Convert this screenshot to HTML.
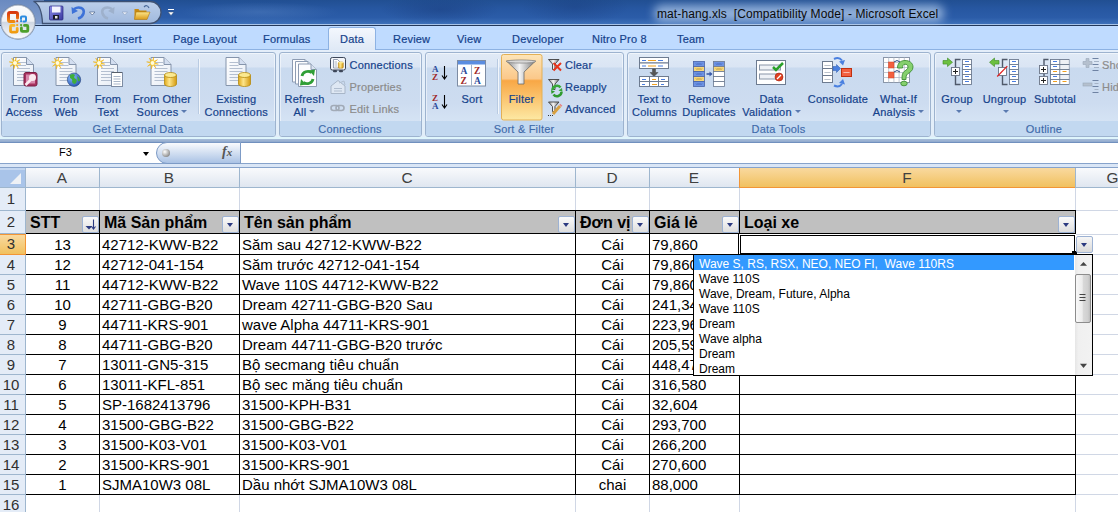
<!DOCTYPE html><html><head><meta charset="utf-8"><style>
*{margin:0;padding:0;box-sizing:border-box}
html,body{width:1118px;height:512px;overflow:hidden;background:#fff;font-family:"Liberation Sans",sans-serif}
.ab{position:absolute}
.t{position:absolute;white-space:nowrap}
.rb{color:#15428b;font-size:11px;line-height:13px;text-align:center;letter-spacing:0.2px;-webkit-text-stroke:0.2px currentColor}
.gl{position:absolute;top:123px;height:13px;color:#3e6aaa;font-size:11px;line-height:13px;text-align:center;white-space:nowrap;letter-spacing:0.2px;-webkit-text-stroke:0.15px currentColor}
.grp{position:absolute;top:52px;height:85px;border:1px solid #9db3cf;border-radius:3px;
 background:linear-gradient(#e0eaf6 0,#dae5f4 14px,#c9daef 15px,#cddcf0 50px,#d5e3f4 68px);overflow:hidden;box-shadow:inset 0 0 0 1px rgba(255,255,255,0.5)}
.grp .lb{position:absolute;left:0;right:0;bottom:0;height:15px;background:#c2d8f0}
.cell{position:absolute;white-space:nowrap;font-size:15px;line-height:20px;color:#000}
</style></head><body>

<div class="ab" style="left:0;top:0;width:1118px;height:25px;background:linear-gradient(#214f92 0%,#2757a1 35%,#2b5ca8 70%,#3a6db6 92%,#4677bd 100%)"></div>
<div class="ab" style="left:380px;top:0;width:120px;height:24px;background:radial-gradient(ellipse at 50% 40%,rgba(20,50,110,0.35),rgba(20,50,110,0) 70%)"></div>
<div class="ab" style="left:520px;top:0;width:110px;height:24px;background:radial-gradient(ellipse at 50% 30%,rgba(20,50,110,0.3),rgba(20,50,110,0) 70%)"></div>
<div class="ab" style="left:180px;top:2px;width:160px;height:20px;background:radial-gradient(ellipse at 50% 50%,rgba(120,160,215,0.25),rgba(120,160,215,0) 70%)"></div>
<div class="ab" style="left:0;top:24px;width:1118px;height:1px;background:#a8c4e8"></div>
<div class="ab" style="left:0;top:25px;width:1118px;height:1px;background:#23385a"></div>
<div class="ab" style="left:654px;top:5px;width:290px;height:17px;border-radius:8px;background:rgba(190,212,240,0.7);filter:blur(5px)"></div>
<div class="t" style="left:657px;top:7px;font-size:12px;line-height:14px;letter-spacing:0.1px;color:#0a0a0a">mat-hang.xls&nbsp; [Compatibility Mode] - Microsoft Excel</div>
<div class="ab" style="left:0;top:0;width:44px;height:24px;background:linear-gradient(#6a8ac0,#819dcc)"></div>
<svg class="ab" style="left:0;top:0" width="200" height="25"><defs><linearGradient id="qat" x1="0" y1="0" x2="0" y2="1"><stop offset="0" stop-color="#bccfea"/><stop offset="1" stop-color="#a0b9de"/></linearGradient><linearGradient id="flop" x1="0" y1="0" x2="1" y2="1"><stop offset="0" stop-color="#8a8ae8"/><stop offset="1" stop-color="#3a3aa0"/></linearGradient><linearGradient id="fold" x1="0" y1="0" x2="0" y2="1"><stop offset="0" stop-color="#fde68a"/><stop offset="1" stop-color="#d99a18"/></linearGradient></defs><path d="M33.5,1.5 H150 A11,11 0 0 1 150,23.5 H42.5 C42,12 40,4 33.5,1.5 Z" fill="url(#qat)" stroke="#3f5273" stroke-width="1.3"/><rect x="49.5" y="6" width="13.5" height="14" rx="1" fill="url(#flop)" stroke="#2a2a80" stroke-width="0.7"/><rect x="52" y="6.5" width="8.5" height="6" fill="#f4f4ff"/><rect x="53" y="15" width="6" height="4.5" fill="#1a1a2a"/><rect x="55" y="16" width="2.5" height="2.5" fill="#e8e8e8"/><path d="M74,9 C79,6 85,8 83.5,13.5 C82.5,16.5 80,18 78,18.5" fill="none" stroke="#3d72d8" stroke-width="2.6"/><path d="M71.5,7 L72,14 L78,11 Z" fill="#3d72d8"/><path d="M89.5,12 h5.5 l-2.75,3 z" fill="#fff" stroke="#35507a" stroke-width="0.6"/><path d="M112,9 C107,6 101,8 102.5,13.5 C103.5,16.5 106,18 108,18.5" fill="none" stroke="#9eb1cc" stroke-width="2.6"/><path d="M114.5,7 L114,14 L108,11 Z" fill="#9eb1cc"/><path d="M122,12 h5.5 l-2.75,3 z" fill="#e8eef8" stroke="#8aa0c0" stroke-width="0.6"/><path d="M134.5,9 h4 l1,1.5 h7 v8.5 h-12 z" fill="#c88a10"/><path d="M136,12 h14 l-3,7.5 h-12.5 z" fill="url(#fold)" stroke="#b07810" stroke-width="0.6"/><path d="M144,7 q3,-3 5,1" fill="none" stroke="#4a6a9a" stroke-width="1.2"/><rect x="168" y="9" width="6" height="1" fill="#fff"/><path d="M168,12 h6 l-3,3.5 z" fill="#fff" stroke="#35507a" stroke-width="0.5"/></svg>
<div class="ab" style="left:0;top:26px;width:1118px;height:24px;background:#bfdbff"></div>
<div class="ab" style="left:0;top:49px;width:1118px;height:1px;background:#8db2e3"></div>
<div class="ab" style="left:328px;top:27px;width:48px;height:23px;border:1px solid #8db2e3;border-bottom:none;border-radius:3px 3px 0 0;background:linear-gradient(#f3f7fd,#dfe9f6)"></div>
<div class="t" style="left:56px;top:33px;font-size:11px;line-height:13px;color:#15428b;letter-spacing:0.2px;-webkit-text-stroke:0.2px currentColor">Home</div>
<div class="t" style="left:113px;top:33px;font-size:11px;line-height:13px;color:#15428b;letter-spacing:0.2px;-webkit-text-stroke:0.2px currentColor">Insert</div>
<div class="t" style="left:173px;top:33px;font-size:11px;line-height:13px;color:#15428b;letter-spacing:0.2px;-webkit-text-stroke:0.2px currentColor">Page Layout</div>
<div class="t" style="left:263px;top:33px;font-size:11px;line-height:13px;color:#15428b;letter-spacing:0.2px;-webkit-text-stroke:0.2px currentColor">Formulas</div>
<div class="t" style="left:340px;top:33px;font-size:11px;line-height:13px;color:#15428b;letter-spacing:0.2px;-webkit-text-stroke:0.2px currentColor">Data</div>
<div class="t" style="left:393px;top:33px;font-size:11px;line-height:13px;color:#15428b;letter-spacing:0.2px;-webkit-text-stroke:0.2px currentColor">Review</div>
<div class="t" style="left:457px;top:33px;font-size:11px;line-height:13px;color:#15428b;letter-spacing:0.2px;-webkit-text-stroke:0.2px currentColor">View</div>
<div class="t" style="left:512px;top:33px;font-size:11px;line-height:13px;color:#15428b;letter-spacing:0.2px;-webkit-text-stroke:0.2px currentColor">Developer</div>
<div class="t" style="left:592px;top:33px;font-size:11px;line-height:13px;color:#15428b;letter-spacing:0.2px;-webkit-text-stroke:0.2px currentColor">Nitro Pro 8</div>
<div class="t" style="left:677px;top:33px;font-size:11px;line-height:13px;color:#15428b;letter-spacing:0.2px;-webkit-text-stroke:0.2px currentColor">Team</div>
<svg class="ab" style="left:0;top:0" width="40" height="44"><defs><linearGradient id="ob" x1="0" y1="0" x2="0" y2="1"><stop offset="0" stop-color="#fdfdfe"/><stop offset="0.48" stop-color="#eef0f4"/><stop offset="0.5" stop-color="#cfd7e2"/><stop offset="0.75" stop-color="#e6eaf0"/><stop offset="1" stop-color="#fbfcfd"/></linearGradient><linearGradient id="lr" x1="0" y1="0" x2="0" y2="1"><stop offset="0" stop-color="#d8380e"/><stop offset="1" stop-color="#f08a10"/></linearGradient><linearGradient id="lo" x1="0" y1="0" x2="0" y2="1"><stop offset="0" stop-color="#fbb828"/><stop offset="1" stop-color="#f09a10"/></linearGradient></defs><circle cx="18" cy="22" r="17.7" fill="#6f7f98" opacity="0.85"/><circle cx="18" cy="22" r="16.8" fill="url(#ob)" stroke="#aeb8c6" stroke-width="0.8"/><g fill="none" stroke-linecap="round"><path d="M17.5,18 V14 Q17.5,12.5 16,12.5 H10 Q8.5,12.5 8.5,14 V20 Q8.5,21.5 10,21.5 H14" stroke="url(#lr)" stroke-width="3"/><path d="M21,19 V17.6 Q21,16.6 22,16.6 H25 Q26,16.6 26,17.6 V20.6 Q26,21.6 25,21.6 H23.5" stroke="#2a8ae0" stroke-width="2"/><path d="M14,25.4 H11.5 Q10.5,25.4 10.5,26.4 V31.1 Q10.5,32.1 11.5,32.1 H16.2 Q17.2,32.1 17.2,31.1 V28.5" stroke="url(#lo)" stroke-width="2.8"/><path d="M24.5,25.4 H26.8 Q27.8,25.4 27.8,26.4 V30.4 Q27.8,31.4 26.8,31.4 H22.4 Q21.4,31.4 21.4,30.4 V28" stroke="#4ea02a" stroke-width="2.8"/></g><circle cx="17.2" cy="21.2" r="1.1" fill="#e2521a"/><circle cx="21.1" cy="21.2" r="1.1" fill="#2a8ae0"/><circle cx="17.2" cy="25.1" r="1.1" fill="#f4a81c"/><circle cx="21.1" cy="25.1" r="1.1" fill="#4ea02a"/></svg>
<div class="ab" style="left:0;top:50px;width:1118px;height:91px;background:linear-gradient(#e4eefa,#e2eef9)"></div>
<div class="grp" style="left:1px;width:275px"><div class="lb"></div></div>
<div class="gl" style="left:1px;width:274px">Get External Data</div>
<div class="grp" style="left:279px;width:143px"><div class="lb"></div></div>
<div class="gl" style="left:279px;width:142px">Connections</div>
<div class="grp" style="left:425px;width:199px"><div class="lb"></div></div>
<div class="gl" style="left:425px;width:198px">Sort &amp; Filter</div>
<div class="grp" style="left:627px;width:304px"><div class="lb"></div></div>
<div class="gl" style="left:627px;width:303px">Data Tools</div>
<div class="grp" style="left:934px;width:221px"><div class="lb"></div></div>
<div class="gl" style="left:934px;width:220px">Outline</div>
<svg class="ab" style="left:0;top:0" width="1118" height="141">
<defs>
<linearGradient id="pg" x1="0" y1="0" x2="1" y2="1"><stop offset="0" stop-color="#ffffff"/><stop offset="1" stop-color="#e6ecf5"/></linearGradient>
<linearGradient id="gold" x1="0" y1="0" x2="1" y2="0"><stop offset="0" stop-color="#e0a818"/><stop offset="0.4" stop-color="#fde58a"/><stop offset="1" stop-color="#d49a10"/></linearGradient>
<linearGradient id="filt" x1="0" y1="0" x2="0" y2="1"><stop offset="0" stop-color="#fde5b8"/><stop offset="0.37" stop-color="#fbc88a"/><stop offset="0.4" stop-color="#f8a745"/><stop offset="1" stop-color="#fde9a4"/></linearGradient>
<linearGradient id="funnel" x1="0" y1="0" x2="1" y2="0"><stop offset="0" stop-color="#8c8c8c"/><stop offset="0.45" stop-color="#f4f4f4"/><stop offset="1" stop-color="#7a7a7a"/></linearGradient>
<radialGradient id="globe" cx="0.35" cy="0.3" r="0.8"><stop offset="0" stop-color="#8fc0ff"/><stop offset="1" stop-color="#1f4fb0"/></radialGradient>
<linearGradient id="sbtn" x1="0" y1="0" x2="0" y2="1"><stop offset="0" stop-color="#ffffff"/><stop offset="1" stop-color="#e3e9f3"/></linearGradient>
</defs>
<g transform="translate(13,57)">
<path d="M0.5,0.5 H13.5 L20.5,7.5 V28.5 H0.5 Z" fill="url(#pg)" stroke="#8594ab"/>
<path d="M13.5,0.5 V7.5 H20.5" fill="#d3def0" stroke="#8594ab"/>
<rect x="4" y="5" width="9" height="1" fill="#b4bfd0"/><rect x="4" y="8" width="9" height="1" fill="#b4bfd0"/><rect x="4" y="11" width="13" height="1" fill="#b4bfd0"/><rect x="4" y="14" width="13" height="1" fill="#b4bfd0"/><rect x="4" y="17" width="13" height="1" fill="#b4bfd0"/><rect x="4" y="20" width="13" height="1" fill="#b4bfd0"/><rect x="4" y="23" width="13" height="1" fill="#b4bfd0"/><g transform="translate(2,6)"><polygon points="5.88,1.17 1.41,0.94 3.33,4.99 0.33,1.67 -1.17,5.88 -0.94,1.41 -4.99,3.33 -1.67,0.33 -5.88,-1.17 -1.41,-0.94 -3.33,-4.99 -0.33,-1.67 1.17,-5.88 0.94,-1.41 4.99,-3.33 1.67,-0.33" fill="#ffd820" stroke="#e8a000" stroke-width="0.4"/><circle cx="0" cy="0" r="2" fill="#fffbe0"/></g></g><g transform="translate(23.5,72)"><rect x="0.5" y="0.5" width="13" height="13.5" rx="2" fill="#a8325f" stroke="#7a1d42"/>
<rect x="2.5" y="2.5" width="9" height="9" fill="#d889ac"/>
<circle cx="9" cy="5.5" r="3.5" fill="#fbe9ef"/><path d="M8,7 L2,13" stroke="#fbe9ef" stroke-width="2.5"/></g><g transform="translate(55.5,57)">
<path d="M0.5,0.5 H13.5 L20.5,7.5 V28.5 H0.5 Z" fill="url(#pg)" stroke="#8594ab"/>
<path d="M13.5,0.5 V7.5 H20.5" fill="#d3def0" stroke="#8594ab"/>
<rect x="4" y="5" width="9" height="1" fill="#b4bfd0"/><rect x="4" y="8" width="9" height="1" fill="#b4bfd0"/><rect x="4" y="11" width="13" height="1" fill="#b4bfd0"/><rect x="4" y="14" width="13" height="1" fill="#b4bfd0"/><rect x="4" y="17" width="13" height="1" fill="#b4bfd0"/><rect x="4" y="20" width="13" height="1" fill="#b4bfd0"/><rect x="4" y="23" width="13" height="1" fill="#b4bfd0"/><g transform="translate(2,6)"><polygon points="5.88,1.17 1.41,0.94 3.33,4.99 0.33,1.67 -1.17,5.88 -0.94,1.41 -4.99,3.33 -1.67,0.33 -5.88,-1.17 -1.41,-0.94 -3.33,-4.99 -0.33,-1.67 1.17,-5.88 0.94,-1.41 4.99,-3.33 1.67,-0.33" fill="#ffd820" stroke="#e8a000" stroke-width="0.4"/><circle cx="0" cy="0" r="2" fill="#fffbe0"/></g></g><circle cx="74" cy="79.7" r="6.7" fill="url(#globe)" stroke="#24427a" stroke-width="0.6"/>
<path d="M70,75 q3,-2 5,0 q-2,3 1,4 q2,2 -1,5 q-2,0 -3,-2 q1,-3 -2,-4z" fill="#3fae3a"/>
<path d="M77,76 q2,1 3,4 q-1,2 -2,1z" fill="#3fae3a"/><g transform="translate(97,57)">
<path d="M0.5,0.5 H13.5 L20.5,7.5 V28.5 H0.5 Z" fill="url(#pg)" stroke="#8594ab"/>
<path d="M13.5,0.5 V7.5 H20.5" fill="#d3def0" stroke="#8594ab"/>
<rect x="4" y="5" width="9" height="1" fill="#b4bfd0"/><rect x="4" y="8" width="9" height="1" fill="#b4bfd0"/><rect x="4" y="11" width="13" height="1" fill="#b4bfd0"/><rect x="4" y="14" width="13" height="1" fill="#b4bfd0"/><rect x="4" y="17" width="13" height="1" fill="#b4bfd0"/><rect x="4" y="20" width="13" height="1" fill="#b4bfd0"/><rect x="4" y="23" width="13" height="1" fill="#b4bfd0"/><g transform="translate(2,6)"><polygon points="5.88,1.17 1.41,0.94 3.33,4.99 0.33,1.67 -1.17,5.88 -0.94,1.41 -4.99,3.33 -1.67,0.33 -5.88,-1.17 -1.41,-0.94 -3.33,-4.99 -0.33,-1.67 1.17,-5.88 0.94,-1.41 4.99,-3.33 1.67,-0.33" fill="#ffd820" stroke="#e8a000" stroke-width="0.4"/><circle cx="0" cy="0" r="2" fill="#fffbe0"/></g></g><g transform="translate(111,71)"><rect x="0.5" y="1.5" width="11" height="14" fill="#ffffff" stroke="#7d8ca3"/>
<path d="M1.5,1.5h1M3.5,1.5h1M5.5,1.5h1M7.5,1.5h1M9.5,1.5h1" stroke="#333" stroke-width="1.2"/>
<rect x="2.5" y="5" width="7" height="1" fill="#a9b6c9"/><rect x="2.5" y="7.5" width="7" height="1" fill="#a9b6c9"/><rect x="2.5" y="10" width="7" height="1" fill="#a9b6c9"/><rect x="2.5" y="12.5" width="7" height="1" fill="#a9b6c9"/></g><g transform="translate(150.5,57)">
<path d="M0.5,0.5 H13.5 L20.5,7.5 V28.5 H0.5 Z" fill="url(#pg)" stroke="#8594ab"/>
<path d="M13.5,0.5 V7.5 H20.5" fill="#d3def0" stroke="#8594ab"/>
<rect x="4" y="5" width="9" height="1" fill="#b4bfd0"/><rect x="4" y="8" width="9" height="1" fill="#b4bfd0"/><rect x="4" y="11" width="13" height="1" fill="#b4bfd0"/><rect x="4" y="14" width="13" height="1" fill="#b4bfd0"/><rect x="4" y="17" width="13" height="1" fill="#b4bfd0"/><rect x="4" y="20" width="13" height="1" fill="#b4bfd0"/><rect x="4" y="23" width="13" height="1" fill="#b4bfd0"/><g transform="translate(2,6)"><polygon points="5.88,1.17 1.41,0.94 3.33,4.99 0.33,1.67 -1.17,5.88 -0.94,1.41 -4.99,3.33 -1.67,0.33 -5.88,-1.17 -1.41,-0.94 -3.33,-4.99 -0.33,-1.67 1.17,-5.88 0.94,-1.41 4.99,-3.33 1.67,-0.33" fill="#ffd820" stroke="#e8a000" stroke-width="0.4"/><circle cx="0" cy="0" r="2" fill="#fffbe0"/></g></g><g transform="translate(164.5,72.5)">
<path d="M0,2.5 V11.5 A6.0,2.5 0 0 0 12,11.5 V2.5" fill="url(#gold)" stroke="#b58a10" stroke-width="0.8"/>
<ellipse cx="6.0" cy="2.5" rx="6.0" ry="2.5" fill="#fbe98f" stroke="#b58a10" stroke-width="0.8"/></g><g transform="translate(225.5,57)">
<path d="M0.5,0.5 H13.5 L20.5,7.5 V28.5 H0.5 Z" fill="url(#pg)" stroke="#8594ab"/>
<path d="M13.5,0.5 V7.5 H20.5" fill="#d3def0" stroke="#8594ab"/>
<rect x="4" y="5" width="9" height="1" fill="#b4bfd0"/><rect x="4" y="8" width="9" height="1" fill="#b4bfd0"/><rect x="4" y="11" width="13" height="1" fill="#b4bfd0"/><rect x="4" y="14" width="13" height="1" fill="#b4bfd0"/><rect x="4" y="17" width="13" height="1" fill="#b4bfd0"/><rect x="4" y="20" width="13" height="1" fill="#b4bfd0"/><rect x="4" y="23" width="13" height="1" fill="#b4bfd0"/></g><g transform="translate(238.5,72.5)">
<path d="M0,2.5 V11.5 A6.0,2.5 0 0 0 12,11.5 V2.5" fill="url(#gold)" stroke="#b58a10" stroke-width="0.8"/>
<ellipse cx="6.0" cy="2.5" rx="6.0" ry="2.5" fill="#fbe98f" stroke="#b58a10" stroke-width="0.8"/></g><rect x="198" y="59" width="1" height="55" fill="#b9cbe2"/><rect x="199" y="59" width="1" height="55" fill="#f2f6fb"/><g transform="translate(292,59)"><path d="M0.5,0.5 H13 L18.5,6 V23 H0.5 Z" fill="#fdfdfe" stroke="#8d9cb3"/><path d="M13,0.5 V6 H18.5" fill="#dae3f1" stroke="#8d9cb3"/></g><g transform="translate(295,61)"><path d="M0.5,0.5 H13 L18.5,6 V23 H0.5 Z" fill="#fdfdfe" stroke="#8d9cb3"/><path d="M13,0.5 V6 H18.5" fill="#dae3f1" stroke="#8d9cb3"/></g><g transform="translate(298,63.5)"><path d="M0.5,0.5 H13 L18.5,6 V23 H0.5 Z" fill="#fdfdfe" stroke="#8d9cb3"/><path d="M13,0.5 V6 H18.5" fill="#dae3f1" stroke="#8d9cb3"/></g><path d="M302,76 A6,5.5 0 0 1 311.5,72.5" fill="none" stroke="#2f9e36" stroke-width="2.8"/>
<path d="M309,70.5 L315,69.5 L314,76 Z" fill="#2f9e36"/>
<path d="M313,79 A6,5.5 0 0 1 303.5,82.5" fill="none" stroke="#2f9e36" stroke-width="2.8"/>
<path d="M306,84.5 L300,85.5 L301,79 Z" fill="#2f9e36"/><rect x="330.5" y="57.5" width="15" height="12.5" rx="1.8" fill="#f4f6fa" stroke="#3c4658"/>
<rect x="333" y="70" width="4" height="2.2" rx="1" fill="#3c4658"/><rect x="339" y="70" width="4" height="2.2" rx="1" fill="#3c4658"/>
<path d="M333.5,59.5 h4 l2,2 v6.5 h-6z" fill="#fff" stroke="#6a7890" stroke-width="0.7"/>
<path d="M334.5,62h2.5M334.5,64h2.5M334.5,66h2.5" stroke="#8a96a8" stroke-width="0.7"/>
<rect x="338.3" y="62" width="5" height="6.2" rx="1.2" fill="url(#gold)" stroke="#a07010" stroke-width="0.5"/>
<ellipse cx="340.8" cy="62.6" rx="2.5" ry="0.9" fill="#fbe98f"/><g transform="translate(330,80)" opacity="0.55"><path d="M1,6 L8,0.5 L15,6 V13.5 H1z" fill="#eef2f7" stroke="#8c98a8"/>
<rect x="4" y="8" width="8" height="1" fill="#9aa6b6"/><rect x="4" y="10.5" width="8" height="1" fill="#9aa6b6"/>
<path d="M9,3 l5,-2 l1,4" fill="none" stroke="#9aa6b6"/></g><g transform="translate(330,104)" fill="none" stroke="#9aa2ad" stroke-width="1.6" opacity="0.85">
<rect x="1" y="1.5" width="8" height="5" rx="2.5"/><rect x="6" y="1.5" width="8" height="5" rx="2.5"/></g><g font-family="'Liberation Serif',serif" font-weight="bold" font-size="9">
<text x="432" y="72" fill="#2a4a9a">A</text><text x="432" y="80" fill="#a02828">Z</text>
<text x="432" y="101" fill="#a02828">Z</text><text x="432" y="109" fill="#2a4a9a">A</text></g>
<path d="M444.5,66 V78 M442,75.5 l2.5,3.5 l2.5,-3.5 M444.5,95 V107 M442,104.5 l2.5,3.5 l2.5,-3.5" stroke="#000" stroke-width="1.1" fill="none"/><g transform="translate(457,60)"><rect x="0.5" y="0.5" width="28" height="25.5" fill="#fff" stroke="#7d8ca3"/>
<rect x="1" y="1" width="27" height="3.5" fill="#5b8de0"/>
<rect x="14" y="4.5" width="1" height="21" fill="#9fb0c8"/>
<g font-family="'Liberation Serif',serif" font-weight="bold" font-size="9.5">
<text x="3.5" y="14" fill="#2a4a9a">A</text><text x="3.5" y="23.5" fill="#a02828">Z</text>
<text x="17" y="14" fill="#a02828">Z</text><text x="17" y="23.5" fill="#2a4a9a">A</text></g></g><rect x="497" y="59" width="1" height="55" fill="#b9cbe2"/><rect x="498" y="59" width="1" height="55" fill="#f2f6fb"/><rect x="501.5" y="54.5" width="40.5" height="65.5" rx="2" fill="url(#filt)" stroke="#e3b055"/>
<path d="M506.5,61 H535.5 L524,72 V84 H518 V72 Z" fill="url(#funnel)" stroke="#6a6a6a" stroke-width="0.8"/>
<ellipse cx="521" cy="61.5" rx="14.5" ry="1.6" fill="#d8d8d8" stroke="#707070" stroke-width="0.6"/><g transform="translate(548,58.5)"><path d="M0.5,1 H11 L7,5.5 V11 H4.5 V5.5Z" fill="url(#funnel)" stroke="#404040" stroke-width="0.9"/>
<path d="M5.5,4.5 L13,12 M13,4.5 L5.5,12" stroke="#e8341a" stroke-width="2"/></g>
<g transform="translate(548,78.5)"><path d="M0.5,1 H11 L7,5.5 V11 H4.5 V5.5Z" fill="url(#funnel)" stroke="#404040" stroke-width="0.9"/>
<path d="M4.5,11.5 A4.5,4.5 0 0 1 12.5,9" fill="none" stroke="#38a838" stroke-width="2.6"/><path d="M14,9.5 l0.5,4 l-4,-1.5z" fill="#38a838"/>
<path d="M13.5,13.5 A4.5,4.5 0 0 1 5.5,16" fill="none" stroke="#2f9a2f" stroke-width="2.6"/><path d="M3.5,15.5 l-0.5,-4 l4,1.5z" fill="#2f9a2f"/></g>
<g transform="translate(548,101)"><path d="M0.5,1 H11 L7,5.5 V10.5 H4.5 V5.5Z" fill="url(#funnel)" stroke="#404040" stroke-width="0.9"/>
<path d="M5,13 L12,5" stroke="#d8a040" stroke-width="3"/><path d="M12.3,4.7 l1,-1" stroke="#e88080" stroke-width="3"/>
<path d="M0,14.5h1M2,14.5h1M4,14.5h1" stroke="#333" stroke-width="1"/></g><g transform="translate(639,57)"><rect x="0.5" y="0.5" width="29" height="5.5" fill="#fff" stroke="#6d7b90"/><rect x="0.5" y="6" width="29" height="5.5" fill="#fff" stroke="#6d7b90"/>
<rect x="3" y="3" width="4" height="1" fill="#4a7ee0"/><rect x="9" y="3" width="8" height="1" fill="#f0a020"/><rect x="19" y="3" width="5" height="1" fill="#4a7ee0"/>
<rect x="3" y="8.5" width="4" height="1" fill="#4a7ee0"/><rect x="9" y="8.5" width="8" height="1" fill="#f0a020"/><rect x="19" y="8.5" width="5" height="1" fill="#4a7ee0"/>
<path d="M13.5,12 h3 v3.5 h2.5 l-4,4 l-4,-4 h2.5z" fill="#555" stroke="#444" stroke-width="0.5"/>
<rect x="0.5" y="19.5" width="29" height="10" fill="#fff" stroke="#6d7b90"/><path d="M10.5,19.5V29.5M19.5,19.5V29.5M0.5,24.5H29.5" stroke="#6d7b90"/>
<rect x="3" y="22" width="4" height="1" fill="#4a7ee0"/><rect x="13" y="22" width="4" height="1" fill="#f0a020"/><rect x="22" y="22" width="4" height="1" fill="#4a7ee0"/>
<rect x="3" y="27" width="3" height="1" fill="#4a7ee0"/><rect x="13" y="27" width="5" height="1" fill="#f0a020"/><rect x="22" y="27" width="3" height="1" fill="#4a7ee0"/></g><g transform="translate(693,61)"><rect x="0.5" y="0.5" width="11" height="5" fill="#6d93e3" stroke="#4a64a8" stroke-width="0.8"/><path d="M3,2.5 l1,1 l1,-1 l1,1 l1,-1 l1,1 l1,-1" fill="none" stroke="#2a48a0" stroke-width="0.6"/><rect x="0.5" y="5.5" width="11" height="5" fill="#f7d77a" stroke="#4a64a8" stroke-width="0.8"/><path d="M3,7.5 l1,1 l1,-1 l1,1 l1,-1 l1,1 l1,-1" fill="none" stroke="#8a6a10" stroke-width="0.6"/><rect x="0.5" y="10.5" width="11" height="5" fill="#6d93e3" stroke="#4a64a8" stroke-width="0.8"/><path d="M3,12.5 l1,1 l1,-1 l1,1 l1,-1 l1,1 l1,-1" fill="none" stroke="#2a48a0" stroke-width="0.6"/><rect x="0.5" y="15.5" width="11" height="5" fill="#f7d77a" stroke="#4a64a8" stroke-width="0.8"/><path d="M3,17.5 l1,1 l1,-1 l1,1 l1,-1 l1,1 l1,-1" fill="none" stroke="#8a6a10" stroke-width="0.6"/><rect x="0.5" y="20.5" width="11" height="5" fill="#6d93e3" stroke="#4a64a8" stroke-width="0.8"/><path d="M3,22.5 l1,1 l1,-1 l1,1 l1,-1 l1,1 l1,-1" fill="none" stroke="#2a48a0" stroke-width="0.6"/><path d="M13.5,13 h5" stroke="#3a5aa8" stroke-width="1.6"/><path d="M16.5,10.5 l3,2.5 l-3,2.5z" fill="#3a5aa8"/><rect x="20.5" y="0.5" width="11" height="5" fill="#6d93e3" stroke="#6a7890" stroke-width="0.8"/><path d="M23,2.5 l1,1 l1,-1 l1,1 l1,-1 l1,1 l1,-1" fill="none" stroke="#2a48a0" stroke-width="0.6"/><rect x="20.5" y="5.5" width="11" height="5" fill="#f7d77a" stroke="#6a7890" stroke-width="0.8"/><path d="M23,7.5 l1,1 l1,-1 l1,1 l1,-1 l1,1 l1,-1" fill="none" stroke="#8a6a10" stroke-width="0.6"/><rect x="20.5" y="10.5" width="11" height="5" fill="#ffffff" stroke="#6a7890" stroke-width="0.8"/><rect x="20.5" y="15.5" width="11" height="5" fill="#ffffff" stroke="#6a7890" stroke-width="0.8"/><rect x="20.5" y="20.5" width="11" height="5" fill="#ffffff" stroke="#6a7890" stroke-width="0.8"/></g><g transform="translate(756,60)"><rect x="0.5" y="0.5" width="29" height="24" fill="#fff" stroke="#6d7b90"/>
<rect x="3.5" y="5" width="21" height="5" fill="#eef1f6" stroke="#8a96a8"/><rect x="3.5" y="14" width="21" height="5" fill="#eef1f6" stroke="#8a96a8"/>
<path d="M17,7 l3,3 l7,-7" stroke="#2aa02a" stroke-width="2.5" fill="none"/>
<circle cx="23" cy="17" r="4" fill="#e04020" stroke="#a02010" stroke-width="0.6"/><path d="M21,19 l4,-4" stroke="#fff" stroke-width="1.3"/></g><g transform="translate(822,61)"><rect x="0.5" y="0.5" width="10" height="7" fill="#fff" stroke="#6d7b90"/><rect x="0.5" y="7.5" width="10" height="7" fill="#fff" stroke="#6d7b90"/><rect x="0.5" y="14.5" width="10" height="7" fill="#fff" stroke="#6d7b90"/>
<path d="M2.5,4 l1,1 l1,-1 l1,1 l1,-1 l1,1 l1,-1 M2.5,11 l1,1 l1,-1 l1,1 l1,-1 l1,1 l1,-1 M2.5,18 l1,1 l1,-1 l1,1 l1,-1 l1,1 l1,-1" fill="none" stroke="#8a96a8" stroke-width="0.7"/></g>
<path d="M833,66.5 h3.5 v-2 l4,4 l-4,4 v-2 h-3.5z" fill="#4a80e0" stroke="#2a5ab0" stroke-width="0.5"/>
<rect x="841.5" y="68.5" width="10" height="8" fill="#f26040" stroke="#c03010"/>
<path d="M843.5,72 l1,1 l1,-1 l1,1 l1,-1 l1,1 l1,-1" fill="none" stroke="#fff" stroke-width="0.7"/>
<path d="M834,59 Q839,56.5 842,60.5" fill="none" stroke="#4a80e0" stroke-width="2"/><path d="M839,61.5 L845,60 L843,65.5z" fill="#4a80e0"/>
<path d="M834,85.5 Q839,88 842,84" fill="none" stroke="#4a80e0" stroke-width="2"/><path d="M839,83 L845,84.5 L843,79z" fill="#4a80e0"/><g transform="translate(883,57)"><rect x="0.5" y="0.5" width="26" height="25" fill="#fff" stroke="#8a96a8"/><path d="M5.7,0.5V25.5M0.5,5.5H26.5" stroke="#b0bac8" stroke-width="0.8"/><path d="M10.9,0.5V25.5M0.5,10.5H26.5" stroke="#b0bac8" stroke-width="0.8"/><path d="M16.1,0.5V25.5M0.5,15.5H26.5" stroke="#b0bac8" stroke-width="0.8"/><path d="M21.3,0.5V25.5M0.5,20.5H26.5" stroke="#b0bac8" stroke-width="0.8"/><rect x="5.5" y="5" width="5.5" height="6" fill="#f26040" stroke="#d04020" stroke-width="0.5"/><rect x="5.5" y="15" width="5.5" height="6" fill="#f26040" stroke="#d04020" stroke-width="0.5"/>
<path d="M11,5 q3,-3 6,0 M11,15 q3,-3 6,0" fill="none" stroke="#2a4a80" stroke-width="1"/></g>
<path d="M897.5,68 C897.5,62 902,60.5 905,60.5 C909.5,60.5 913,63 913,67 C913,71 909.5,72.5 907.5,74 C906,75 906,77 906,79.5 L902,79.5 C902,76 902,73 904.5,71.2 C906.5,69.8 908,68.8 908,67 C908,65 906.5,64.2 905,64.2 C903,64.2 902.5,66 902.5,68 Z" fill="#86d06e" stroke="#3f8f35" stroke-width="0.9"/>
<ellipse cx="904" cy="83.5" rx="3.2" ry="2.3" fill="#86d06e" stroke="#3f8f35" stroke-width="0.9"/><path d="M943,60.5 h4.5 v-2.5 l5,4.3 l-5,4.3 v-2.5 h-4.5z" fill="#6cc040" stroke="#3a8a20" stroke-width="0.6"/><path d="M960.5,59.5 h-5 v25 h5" fill="none" stroke="#4f596a" stroke-width="1.4"/><rect x="951.5" y="67.5" width="8" height="8" fill="#fff" stroke="#6a7486" stroke-width="0.9"/><path d="M953.0,71.5h5M955.5,69.0v5" stroke="#222" stroke-width="1"/><rect x="962.5" y="59.5" width="9" height="5" fill="#fff" stroke="#6d7b90" stroke-width="0.9"/><rect x="965.0" y="61.0" width="4" height="1" fill="#4a7ee0"/><rect x="962.5" y="64.5" width="9" height="5" fill="#fff" stroke="#6d7b90" stroke-width="0.9"/><rect x="965.0" y="66.0" width="4" height="1" fill="#4a7ee0"/><rect x="962.5" y="69.5" width="9" height="5" fill="#fff" stroke="#6d7b90" stroke-width="0.9"/><rect x="965.0" y="71.0" width="4" height="1" fill="#4a7ee0"/><rect x="962.5" y="74.5" width="9" height="5" fill="#fff" stroke="#6d7b90" stroke-width="0.9"/><rect x="965.0" y="76.0" width="4" height="1" fill="#4a7ee0"/><rect x="962.5" y="79.5" width="9" height="5" fill="#fff" stroke="#6d7b90" stroke-width="0.9"/><rect x="965.0" y="81.0" width="4" height="1" fill="#4a7ee0"/><path d="M999,60.5 h-4.5 v-2.5 l-5,4.3 l5,4.3 v-2.5 h4.5z" fill="#6cc040" stroke="#3a8a20" stroke-width="0.6"/><path d="M1007.5,59.5 h-5 v25 h5" fill="none" stroke="#4f596a" stroke-width="1.4"/><rect x="998.5" y="67.5" width="8" height="8" fill="#fff" stroke="#6a7486" stroke-width="0.9"/><path d="M997.2,76.5 L1007.3,66.2" stroke="#e02020" stroke-width="1.2"/><rect x="1009.5" y="59.5" width="9" height="5" fill="#fff" stroke="#6d7b90" stroke-width="0.9"/><rect x="1012.0" y="61.0" width="4" height="1" fill="#4a7ee0"/><rect x="1009.5" y="64.5" width="9" height="5" fill="#fff" stroke="#6d7b90" stroke-width="0.9"/><rect x="1012.0" y="66.0" width="4" height="1" fill="#4a7ee0"/><rect x="1009.5" y="69.5" width="9" height="5" fill="#fff" stroke="#6d7b90" stroke-width="0.9"/><rect x="1012.0" y="71.0" width="4" height="1" fill="#4a7ee0"/><rect x="1009.5" y="74.5" width="9" height="5" fill="#fff" stroke="#6d7b90" stroke-width="0.9"/><rect x="1012.0" y="76.0" width="4" height="1" fill="#4a7ee0"/><rect x="1009.5" y="79.5" width="9" height="5" fill="#fff" stroke="#6d7b90" stroke-width="0.9"/><rect x="1012.0" y="81.0" width="4" height="1" fill="#4a7ee0"/><path d="M1048.5,59.5 h-4.5 v6 M1044,73.5 v3" fill="none" stroke="#4f596a" stroke-width="1.4"/><rect x="1039.5" y="65.5" width="8" height="8" fill="#fff" stroke="#6a7486" stroke-width="0.9"/><path d="M1041.0,69.5h5M1043.5,67.0v5" stroke="#222" stroke-width="1"/><rect x="1039.5" y="76.5" width="8" height="8" fill="#fff" stroke="#6a7486" stroke-width="0.9"/><path d="M1041.0,80.5h5M1043.5,78.0v5" stroke="#222" stroke-width="1"/><rect x="1050.5" y="59.5" width="18.5" height="5" fill="#fff" stroke="#6d7b90" stroke-width="0.9"/><rect x="1059.75" y="60.0" width="9" height="4" fill="#eef1f6"/><path d="M1059.75,59.5v5" stroke="#6d7b90" stroke-width="0.9"/><rect x="1053.0" y="61.0" width="4" height="1" fill="#4a7ee0"/><rect x="1050.5" y="64.5" width="18.5" height="5" fill="#fff" stroke="#6d7b90" stroke-width="0.9"/><rect x="1059.75" y="65.0" width="9" height="4" fill="#eef1f6"/><path d="M1059.75,64.5v5" stroke="#6d7b90" stroke-width="0.9"/><rect x="1053.0" y="66.0" width="4" height="1" fill="#4a7ee0"/><rect x="1050.5" y="69.5" width="18.5" height="5" fill="#fff" stroke="#6d7b90" stroke-width="0.9"/><rect x="1059.75" y="70.0" width="9" height="4" fill="#fff"/><path d="M1059.75,69.5v5" stroke="#6d7b90" stroke-width="0.9"/><rect x="1053.0" y="71.0" width="4" height="1" fill="#f0a020"/><rect x="1062.5" y="71.0" width="4" height="1" fill="#f0a020"/><rect x="1050.5" y="74.5" width="18.5" height="5" fill="#fff" stroke="#6d7b90" stroke-width="0.9"/><rect x="1059.75" y="75.0" width="9" height="4" fill="#eef1f6"/><path d="M1059.75,74.5v5" stroke="#6d7b90" stroke-width="0.9"/><rect x="1053.0" y="76.0" width="4" height="1" fill="#4a7ee0"/><rect x="1050.5" y="79.5" width="18.5" height="5" fill="#fff" stroke="#6d7b90" stroke-width="0.9"/><rect x="1059.75" y="80.0" width="9" height="4" fill="#fff"/><path d="M1059.75,79.5v5" stroke="#6d7b90" stroke-width="0.9"/><rect x="1053.0" y="81.0" width="4" height="1" fill="#f0a020"/><rect x="1062.5" y="81.0" width="4" height="1" fill="#f0a020"/><g transform="translate(1083,58)"><path d="M3,0.5h3v3h3v3h-3v3h-3v-3h-3v-3h3z" fill="#b5c0ce" stroke="#9aa8ba" stroke-width="0.6"/>
<path d="M9.5,0.5h6M11.5,3.5h4M9.5,6.5h6M11.5,9.5h4M9.5,12.5h6" stroke="#6f83a3" stroke-width="1"/><path d="M11.5,3.5h4M11.5,9.5h4" stroke="#a5b3c6" stroke-width="1"/></g>
<g transform="translate(1083,80)"><rect x="0" y="3" width="9" height="3" fill="#b5c0ce" stroke="#9aa8ba" stroke-width="0.6"/>
<path d="M9.5,0.5h6M9.5,6.5h6M9.5,12.5h6" stroke="#6f83a3" stroke-width="1"/><path d="M11.5,3.5h4M11.5,9.5h4" stroke="#a5b3c6" stroke-width="1"/></g></svg>
<div class="t rb" style="left:-21.0px;width:90px;top:93px;color:#15428b">From</div>
<div class="t rb" style="left:-21.0px;width:90px;top:106px;color:#15428b">Access</div>
<div class="t rb" style="left:21.0px;width:90px;top:93px;color:#15428b">From</div>
<div class="t rb" style="left:21.0px;width:90px;top:106px;color:#15428b">Web</div>
<div class="t rb" style="left:63.0px;width:90px;top:93px;color:#15428b">From</div>
<div class="t rb" style="left:63.0px;width:90px;top:106px;color:#15428b">Text</div>
<div class="t rb" style="left:117.0px;width:90px;top:93px;color:#15428b">From Other</div>
<div class="t rb" style="left:117.0px;width:90px;top:106px;color:#15428b">Sources<span style="display:inline-block;width:0;height:0;border-left:3px solid transparent;border-right:3px solid transparent;border-top:3px solid #5a7ab0;vertical-align:3px;margin-left:3px;-webkit-text-stroke:0"></span></div>
<div class="t rb" style="left:191.3px;width:90px;top:93px;color:#15428b">Existing</div>
<div class="t rb" style="left:191.3px;width:90px;top:106px;color:#15428b">Connections</div>
<div class="t rb" style="left:259.5px;width:90px;top:93px;color:#15428b">Refresh</div>
<div class="t rb" style="left:259.5px;width:90px;top:106px;color:#15428b">All<span style="display:inline-block;width:0;height:0;border-left:3px solid transparent;border-right:3px solid transparent;border-top:3px solid #5a7ab0;vertical-align:3px;margin-left:3px;-webkit-text-stroke:0"></span></div>
<div class="t rb" style="left:427.0px;width:90px;top:93px;color:#15428b">Sort</div>
<div class="t rb" style="left:476.5px;width:90px;top:93px;color:#15428b">Filter</div>
<div class="t rb" style="left:609.5px;width:90px;top:93px;color:#15428b">Text to</div>
<div class="t rb" style="left:609.5px;width:90px;top:106px;color:#15428b">Columns</div>
<div class="t rb" style="left:664.0px;width:90px;top:93px;color:#15428b">Remove</div>
<div class="t rb" style="left:664.0px;width:90px;top:106px;color:#15428b">Duplicates</div>
<div class="t rb" style="left:726.5px;width:90px;top:93px;color:#15428b">Data</div>
<div class="t rb" style="left:726.5px;width:90px;top:106px;color:#15428b">Validation<span style="display:inline-block;width:0;height:0;border-left:3px solid transparent;border-right:3px solid transparent;border-top:3px solid #5a7ab0;vertical-align:3px;margin-left:3px;-webkit-text-stroke:0"></span></div>
<div class="t rb" style="left:793.0px;width:90px;top:93px;color:#15428b">Consolidate</div>
<div class="t rb" style="left:853.5px;width:90px;top:93px;color:#15428b">What-If</div>
<div class="t rb" style="left:853.5px;width:90px;top:106px;color:#15428b">Analysis<span style="display:inline-block;width:0;height:0;border-left:3px solid transparent;border-right:3px solid transparent;border-top:3px solid #5a7ab0;vertical-align:3px;margin-left:3px;-webkit-text-stroke:0"></span></div>
<div class="t rb" style="left:912.0px;width:90px;top:93px;color:#15428b">Group</div>
<div class="t rb" style="left:912.0px;width:90px;top:106px;color:#15428b"><span style="display:inline-block;width:0;height:0;border-left:3px solid transparent;border-right:3px solid transparent;border-top:3px solid #5a7ab0;vertical-align:3px;margin-left:3px;-webkit-text-stroke:0"></span></div>
<div class="t rb" style="left:959.5px;width:90px;top:93px;color:#15428b">Ungroup</div>
<div class="t rb" style="left:959.5px;width:90px;top:106px;color:#15428b"><span style="display:inline-block;width:0;height:0;border-left:3px solid transparent;border-right:3px solid transparent;border-top:3px solid #5a7ab0;vertical-align:3px;margin-left:3px;-webkit-text-stroke:0"></span></div>
<div class="t rb" style="left:1010.0px;width:90px;top:93px;color:#15428b">Subtotal</div>
<div class="t rb" style="left:349.5px;top:59px;text-align:left;color:#15428b">Connections</div>
<div class="t rb" style="left:349.5px;top:81px;text-align:left;color:#8c8c8c">Properties</div>
<div class="t rb" style="left:349.5px;top:103px;text-align:left;color:#8c8c8c">Edit Links</div>
<div class="t rb" style="left:565px;top:59px;text-align:left;color:#15428b">Clear</div>
<div class="t rb" style="left:565px;top:81px;text-align:left;color:#15428b">Reapply</div>
<div class="t rb" style="left:565px;top:103px;text-align:left;color:#15428b">Advanced</div>
<div class="t rb" style="left:1102px;top:59px;text-align:left;color:#8c8c8c">Show Detail</div>
<div class="t rb" style="left:1102px;top:81px;text-align:left;color:#8c8c8c">Hide Detail</div>
<div class="ab" style="left:0;top:137px;width:1118px;height:2px;background:#dff5fc"></div>
<div class="ab" style="left:0;top:139px;width:1118px;height:3px;background:linear-gradient(#aabed9,#8ea8cd)"></div>
<div class="ab" style="left:0;top:142px;width:1118px;height:22px;background:#fff;border-top:1px solid #7190be;border-bottom:1px solid #87a3cb"></div>
<div class="t" style="left:59px;top:146px;font-size:11px;line-height:13px;color:#000">F3</div>
<div class="ab" style="left:143px;top:152px;width:0;height:0;border-left:3.5px solid transparent;border-right:3.5px solid transparent;border-top:4px solid #000"></div>
<svg class="ab" style="left:150px;top:142px" width="95" height="22"><defs><linearGradient id="fxg" x1="0" y1="0" x2="0" y2="1"><stop offset="0" stop-color="#fbfcfe"/><stop offset="1" stop-color="#a8c1e4"/></linearGradient><radialGradient id="fxc" cx="0.35" cy="0.35" r="0.7"><stop offset="0" stop-color="#ffffff"/><stop offset="1" stop-color="#8a8a8a"/></radialGradient></defs><path d="M90.5,0.5 H17 A10.5,10.5 0 0 0 17,21.5 H90.5 Z" fill="url(#fxg)" stroke="#7d9bc6"/><circle cx="16" cy="11" r="4" fill="url(#fxc)"/></svg>
<div class="t" style="left:222px;top:144px;font-family:'Liberation Serif',serif;font-style:italic;font-weight:bold;font-size:14px;line-height:16px;color:#555">f<span style="font-size:11px">x</span></div>
<div class="ab" style="left:0;top:164px;width:1118px;height:3px;background:#dae6f6"></div>
<div class="ab" style="left:0;top:167px;width:1118px;height:21px;background:linear-gradient(#f9fafc,#dfe6f0);border-top:1px solid #87a3cb;border-bottom:1px solid #9eb6ce"></div>
<div class="ab" style="left:739px;top:168px;width:336px;height:20px;background:linear-gradient(#f9d99f,#f1c15f);border-left:1px solid #f29536;border-bottom:1px solid #f29536"></div>
<div class="ab" style="left:0;top:188px;width:26px;height:330px;background:#e4ecf7;border-right:1px solid #9eb6ce"></div>
<div class="ab" style="left:0;top:168px;width:25px;height:19px;background:#a9c4e9;border-top:2px solid #c4d7f1"></div>
<svg class="ab" style="left:0;top:168px" width="25" height="19"><path d="M10,16 L21,5 V16 Z" fill="#eef1f5"/></svg>
<div class="ab" style="left:25px;top:168px;width:1px;height:19px;background:#9eb6ce"></div>
<div class="ab" style="left:99px;top:168px;width:1px;height:19px;background:#9eb6ce"></div>
<div class="ab" style="left:239px;top:168px;width:1px;height:19px;background:#9eb6ce"></div>
<div class="ab" style="left:575px;top:168px;width:1px;height:19px;background:#9eb6ce"></div>
<div class="ab" style="left:649px;top:168px;width:1px;height:19px;background:#9eb6ce"></div>
<div class="ab" style="left:1075px;top:168px;width:1px;height:19px;background:#9eb6ce"></div>
<div class="t" style="left:25px;width:74px;top:169px;text-align:center;font-size:15.4px;line-height:17px;color:#404040">A</div>
<div class="t" style="left:99px;width:140px;top:169px;text-align:center;font-size:15.4px;line-height:17px;color:#404040">B</div>
<div class="t" style="left:239px;width:336px;top:169px;text-align:center;font-size:15.4px;line-height:17px;color:#404040">C</div>
<div class="t" style="left:575px;width:74px;top:169px;text-align:center;font-size:15.4px;line-height:17px;color:#404040">D</div>
<div class="t" style="left:649px;width:90px;top:169px;text-align:center;font-size:15.4px;line-height:17px;color:#404040">E</div>
<div class="t" style="left:739px;width:336px;top:169px;text-align:center;font-size:15.4px;line-height:17px;color:#404040">F</div>
<div class="t" style="left:1075px;width:75px;top:169px;text-align:center;font-size:15.4px;line-height:17px;color:#404040">G</div>
<div class="ab" style="left:26px;top:210px;width:1092px;height:1px;background:#d0d7e5"></div>
<div class="ab" style="left:26px;top:234px;width:1092px;height:1px;background:#d0d7e5"></div>
<div class="ab" style="left:26px;top:254px;width:1092px;height:1px;background:#d0d7e5"></div>
<div class="ab" style="left:26px;top:274px;width:1092px;height:1px;background:#d0d7e5"></div>
<div class="ab" style="left:26px;top:294px;width:1092px;height:1px;background:#d0d7e5"></div>
<div class="ab" style="left:26px;top:314px;width:1092px;height:1px;background:#d0d7e5"></div>
<div class="ab" style="left:26px;top:334px;width:1092px;height:1px;background:#d0d7e5"></div>
<div class="ab" style="left:26px;top:354px;width:1092px;height:1px;background:#d0d7e5"></div>
<div class="ab" style="left:26px;top:374px;width:1092px;height:1px;background:#d0d7e5"></div>
<div class="ab" style="left:26px;top:394px;width:1092px;height:1px;background:#d0d7e5"></div>
<div class="ab" style="left:26px;top:414px;width:1092px;height:1px;background:#d0d7e5"></div>
<div class="ab" style="left:26px;top:434px;width:1092px;height:1px;background:#d0d7e5"></div>
<div class="ab" style="left:26px;top:454px;width:1092px;height:1px;background:#d0d7e5"></div>
<div class="ab" style="left:26px;top:474px;width:1092px;height:1px;background:#d0d7e5"></div>
<div class="ab" style="left:26px;top:494px;width:1092px;height:1px;background:#d0d7e5"></div>
<div class="ab" style="left:99px;top:188px;width:1px;height:330px;background:#d0d7e5"></div>
<div class="ab" style="left:239px;top:188px;width:1px;height:330px;background:#d0d7e5"></div>
<div class="ab" style="left:575px;top:188px;width:1px;height:330px;background:#d0d7e5"></div>
<div class="ab" style="left:649px;top:188px;width:1px;height:330px;background:#d0d7e5"></div>
<div class="ab" style="left:739px;top:188px;width:1px;height:330px;background:#d0d7e5"></div>
<div class="ab" style="left:1075px;top:188px;width:1px;height:330px;background:#d0d7e5"></div>
<div class="ab" style="left:0;top:210px;width:25px;height:1px;background:#9eb6ce"></div>
<div class="ab" style="left:0;top:233px;width:25px;height:1px;background:#9eb6ce"></div>
<div class="ab" style="left:0;top:254px;width:25px;height:1px;background:#9eb6ce"></div>
<div class="ab" style="left:0;top:274px;width:25px;height:1px;background:#9eb6ce"></div>
<div class="ab" style="left:0;top:294px;width:25px;height:1px;background:#9eb6ce"></div>
<div class="ab" style="left:0;top:314px;width:25px;height:1px;background:#9eb6ce"></div>
<div class="ab" style="left:0;top:334px;width:25px;height:1px;background:#9eb6ce"></div>
<div class="ab" style="left:0;top:354px;width:25px;height:1px;background:#9eb6ce"></div>
<div class="ab" style="left:0;top:374px;width:25px;height:1px;background:#9eb6ce"></div>
<div class="ab" style="left:0;top:394px;width:25px;height:1px;background:#9eb6ce"></div>
<div class="ab" style="left:0;top:414px;width:25px;height:1px;background:#9eb6ce"></div>
<div class="ab" style="left:0;top:434px;width:25px;height:1px;background:#9eb6ce"></div>
<div class="ab" style="left:0;top:454px;width:25px;height:1px;background:#9eb6ce"></div>
<div class="ab" style="left:0;top:474px;width:25px;height:1px;background:#9eb6ce"></div>
<div class="ab" style="left:0;top:494px;width:25px;height:1px;background:#9eb6ce"></div>
<div class="ab" style="left:0;top:234px;width:26px;height:21px;background:linear-gradient(#f9d99f,#f1c15f);border:1px solid #f29536;border-left:none"></div>
<div class="t" style="left:0;width:22px;top:188px;height:22px;text-align:center;font-size:15px;line-height:22px;color:#303030">1</div>
<div class="t" style="left:0;width:22px;top:211px;height:22px;text-align:center;font-size:15px;line-height:22px;color:#303030">2</div>
<div class="t" style="left:0;width:22px;top:234px;height:20px;text-align:center;font-size:15px;line-height:20px;color:#303030">3</div>
<div class="t" style="left:0;width:22px;top:255px;height:19px;text-align:center;font-size:15px;line-height:19px;color:#303030">4</div>
<div class="t" style="left:0;width:22px;top:275px;height:19px;text-align:center;font-size:15px;line-height:19px;color:#303030">5</div>
<div class="t" style="left:0;width:22px;top:295px;height:19px;text-align:center;font-size:15px;line-height:19px;color:#303030">6</div>
<div class="t" style="left:0;width:22px;top:315px;height:19px;text-align:center;font-size:15px;line-height:19px;color:#303030">7</div>
<div class="t" style="left:0;width:22px;top:335px;height:19px;text-align:center;font-size:15px;line-height:19px;color:#303030">8</div>
<div class="t" style="left:0;width:22px;top:355px;height:19px;text-align:center;font-size:15px;line-height:19px;color:#303030">9</div>
<div class="t" style="left:0;width:22px;top:375px;height:19px;text-align:center;font-size:15px;line-height:19px;color:#303030">10</div>
<div class="t" style="left:0;width:22px;top:395px;height:19px;text-align:center;font-size:15px;line-height:19px;color:#303030">11</div>
<div class="t" style="left:0;width:22px;top:415px;height:19px;text-align:center;font-size:15px;line-height:19px;color:#303030">12</div>
<div class="t" style="left:0;width:22px;top:435px;height:19px;text-align:center;font-size:15px;line-height:19px;color:#303030">13</div>
<div class="t" style="left:0;width:22px;top:455px;height:19px;text-align:center;font-size:15px;line-height:19px;color:#303030">14</div>
<div class="t" style="left:0;width:22px;top:475px;height:19px;text-align:center;font-size:15px;line-height:19px;color:#303030">15</div>
<div class="t" style="left:0;width:22px;top:495px;height:19px;text-align:center;font-size:15px;line-height:19px;color:#303030">16</div>
<div class="ab" style="left:26px;top:210px;width:1050px;height:24px;background:#c0c0c0"></div>
<div class="ab" style="left:26px;top:234px;width:1049px;height:1px;background:#fff"></div>
<div class="ab" style="left:26px;top:210px;width:1050px;height:1px;background:#000"></div>
<div class="ab" style="left:26px;top:233px;width:1050px;height:1px;background:#000"></div>
<div class="ab" style="left:26px;top:254px;width:1050px;height:1px;background:#000"></div>
<div class="ab" style="left:26px;top:274px;width:1050px;height:1px;background:#000"></div>
<div class="ab" style="left:26px;top:294px;width:1050px;height:1px;background:#000"></div>
<div class="ab" style="left:26px;top:314px;width:1050px;height:1px;background:#000"></div>
<div class="ab" style="left:26px;top:334px;width:1050px;height:1px;background:#000"></div>
<div class="ab" style="left:26px;top:354px;width:1050px;height:1px;background:#000"></div>
<div class="ab" style="left:26px;top:374px;width:1050px;height:1px;background:#000"></div>
<div class="ab" style="left:26px;top:394px;width:1050px;height:1px;background:#000"></div>
<div class="ab" style="left:26px;top:414px;width:1050px;height:1px;background:#000"></div>
<div class="ab" style="left:26px;top:434px;width:1050px;height:1px;background:#000"></div>
<div class="ab" style="left:26px;top:454px;width:1050px;height:1px;background:#000"></div>
<div class="ab" style="left:26px;top:474px;width:1050px;height:1px;background:#000"></div>
<div class="ab" style="left:26px;top:494px;width:1050px;height:1px;background:#000"></div>
<div class="ab" style="left:99px;top:210px;width:1px;height:285px;background:#000"></div>
<div class="ab" style="left:239px;top:210px;width:1px;height:285px;background:#000"></div>
<div class="ab" style="left:575px;top:210px;width:1px;height:285px;background:#000"></div>
<div class="ab" style="left:649px;top:210px;width:1px;height:285px;background:#000"></div>
<div class="ab" style="left:739px;top:210px;width:1px;height:285px;background:#000"></div>
<div class="ab" style="left:1075px;top:210px;width:1px;height:285px;background:#000"></div>
<div class="ab" style="left:738px;top:233px;width:1px;height:21px;background:#000"></div>
<div class="ab" style="left:739px;top:234px;width:1px;height:20px;background:#fff"></div>
<div class="ab" style="left:1075px;top:234px;width:1px;height:20px;background:#fff"></div>
<div class="cell" style="left:30px;top:212px;line-height:22px;font-size:16px;font-weight:bold">STT</div>
<div class="cell" style="left:104px;top:212px;line-height:22px;font-size:16px;font-weight:bold">Mã Sản phẩm</div>
<div class="cell" style="left:244px;top:212px;line-height:22px;font-size:16px;font-weight:bold">Tên sản phẩm</div>
<div class="cell" style="left:580px;top:212px;line-height:22px;font-size:16px;font-weight:bold">Đơn vị</div>
<div class="cell" style="left:654px;top:212px;line-height:22px;font-size:16px;font-weight:bold">Giá lẻ</div>
<div class="cell" style="left:744px;top:212px;line-height:22px;font-size:16px;font-weight:bold">Loại xe</div>
<div class="ab" style="left:82px;top:216px;width:17px;height:17px;border:1px solid #9db2d3;border-radius:2px;background:linear-gradient(#fafafa,#dedede)"></div>
<svg class="ab" style="left:82px;top:216px" width="17" height="17"><path d="M3.5,10 h7 l-3.5,3.5z" fill="#2b3a80"/><path d="M11.5,3.5 v9 M9.5,10.5 l2,2.5 l2,-2.5" stroke="#2b3a80" stroke-width="1.1" fill="none"/></svg>
<div class="ab" style="left:222px;top:216px;width:17px;height:17px;border:1px solid #9db2d3;border-radius:2px;background:linear-gradient(#fafafa,#dedede)"></div>
<div class="ab" style="left:227px;top:223px;width:0;height:0;border-left:3.5px solid transparent;border-right:3.5px solid transparent;border-top:4px solid #2b3a80"></div>
<div class="ab" style="left:558px;top:216px;width:17px;height:17px;border:1px solid #9db2d3;border-radius:2px;background:linear-gradient(#fafafa,#dedede)"></div>
<div class="ab" style="left:563px;top:223px;width:0;height:0;border-left:3.5px solid transparent;border-right:3.5px solid transparent;border-top:4px solid #2b3a80"></div>
<div class="ab" style="left:632px;top:216px;width:17px;height:17px;border:1px solid #9db2d3;border-radius:2px;background:linear-gradient(#fafafa,#dedede)"></div>
<div class="ab" style="left:637px;top:223px;width:0;height:0;border-left:3.5px solid transparent;border-right:3.5px solid transparent;border-top:4px solid #2b3a80"></div>
<div class="ab" style="left:722px;top:216px;width:17px;height:17px;border:1px solid #9db2d3;border-radius:2px;background:linear-gradient(#fafafa,#dedede)"></div>
<div class="ab" style="left:727px;top:223px;width:0;height:0;border-left:3.5px solid transparent;border-right:3.5px solid transparent;border-top:4px solid #2b3a80"></div>
<div class="ab" style="left:1058px;top:216px;width:17px;height:17px;border:1px solid #9db2d3;border-radius:2px;background:linear-gradient(#fafafa,#dedede)"></div>
<div class="ab" style="left:1063px;top:223px;width:0;height:0;border-left:3.5px solid transparent;border-right:3.5px solid transparent;border-top:4px solid #2b3a80"></div>
<div class="cell" style="left:26px;width:73px;top:235px;text-align:center">13</div>
<div class="cell" style="left:102px;top:235px">42712-KWW-B22</div>
<div class="cell" style="left:242px;top:235px">Săm sau 42712-KWW-B22</div>
<div class="cell" style="left:576px;width:73px;top:235px;text-align:center">Cái</div>
<div class="cell" style="left:652px;top:235px">79,860</div>
<div class="cell" style="left:26px;width:73px;top:255px;text-align:center">12</div>
<div class="cell" style="left:102px;top:255px">42712-041-154</div>
<div class="cell" style="left:242px;top:255px">Săm trước 42712-041-154</div>
<div class="cell" style="left:576px;width:73px;top:255px;text-align:center">Cái</div>
<div class="cell" style="left:652px;top:255px">79,860</div>
<div class="cell" style="left:26px;width:73px;top:275px;text-align:center">11</div>
<div class="cell" style="left:102px;top:275px">44712-KWW-B22</div>
<div class="cell" style="left:242px;top:275px">Wave 110S 44712-KWW-B22</div>
<div class="cell" style="left:576px;width:73px;top:275px;text-align:center">Cái</div>
<div class="cell" style="left:652px;top:275px">79,860</div>
<div class="cell" style="left:26px;width:73px;top:295px;text-align:center">10</div>
<div class="cell" style="left:102px;top:295px">42711-GBG-B20</div>
<div class="cell" style="left:242px;top:295px">Dream 42711-GBG-B20 Sau</div>
<div class="cell" style="left:576px;width:73px;top:295px;text-align:center">Cái</div>
<div class="cell" style="left:652px;top:295px">241,340</div>
<div class="cell" style="left:26px;width:73px;top:315px;text-align:center">9</div>
<div class="cell" style="left:102px;top:315px">44711-KRS-901</div>
<div class="cell" style="left:242px;top:315px">wave Alpha 44711-KRS-901</div>
<div class="cell" style="left:576px;width:73px;top:315px;text-align:center">Cái</div>
<div class="cell" style="left:652px;top:315px">223,960</div>
<div class="cell" style="left:26px;width:73px;top:335px;text-align:center">8</div>
<div class="cell" style="left:102px;top:335px">44711-GBG-B20</div>
<div class="cell" style="left:242px;top:335px">Dream 44711-GBG-B20 trước</div>
<div class="cell" style="left:576px;width:73px;top:335px;text-align:center">Cái</div>
<div class="cell" style="left:652px;top:335px">205,590</div>
<div class="cell" style="left:26px;width:73px;top:355px;text-align:center">7</div>
<div class="cell" style="left:102px;top:355px">13011-GN5-315</div>
<div class="cell" style="left:242px;top:355px">Bộ secmang tiêu chuẩn</div>
<div class="cell" style="left:576px;width:73px;top:355px;text-align:center">Cái</div>
<div class="cell" style="left:652px;top:355px">448,470</div>
<div class="cell" style="left:26px;width:73px;top:375px;text-align:center">6</div>
<div class="cell" style="left:102px;top:375px">13011-KFL-851</div>
<div class="cell" style="left:242px;top:375px">Bộ sec măng tiêu chuẩn</div>
<div class="cell" style="left:576px;width:73px;top:375px;text-align:center">Cái</div>
<div class="cell" style="left:652px;top:375px">316,580</div>
<div class="cell" style="left:26px;width:73px;top:395px;text-align:center">5</div>
<div class="cell" style="left:102px;top:395px">SP-1682413796</div>
<div class="cell" style="left:242px;top:395px">31500-KPH-B31</div>
<div class="cell" style="left:576px;width:73px;top:395px;text-align:center">Cái</div>
<div class="cell" style="left:652px;top:395px">32,604</div>
<div class="cell" style="left:26px;width:73px;top:415px;text-align:center">4</div>
<div class="cell" style="left:102px;top:415px">31500-GBG-B22</div>
<div class="cell" style="left:242px;top:415px">31500-GBG-B22</div>
<div class="cell" style="left:576px;width:73px;top:415px;text-align:center">Cái</div>
<div class="cell" style="left:652px;top:415px">293,700</div>
<div class="cell" style="left:26px;width:73px;top:435px;text-align:center">3</div>
<div class="cell" style="left:102px;top:435px">31500-K03-V01</div>
<div class="cell" style="left:242px;top:435px">31500-K03-V01</div>
<div class="cell" style="left:576px;width:73px;top:435px;text-align:center">Cái</div>
<div class="cell" style="left:652px;top:435px">266,200</div>
<div class="cell" style="left:26px;width:73px;top:455px;text-align:center">2</div>
<div class="cell" style="left:102px;top:455px">31500-KRS-901</div>
<div class="cell" style="left:242px;top:455px">31500-KRS-901</div>
<div class="cell" style="left:576px;width:73px;top:455px;text-align:center">Cái</div>
<div class="cell" style="left:652px;top:455px">270,600</div>
<div class="cell" style="left:26px;width:73px;top:475px;text-align:center">1</div>
<div class="cell" style="left:102px;top:475px">SJMA10W3 08L</div>
<div class="cell" style="left:242px;top:475px">Dầu nhớt SJMA10W3 08L</div>
<div class="cell" style="left:576px;width:73px;top:475px;text-align:center">chai</div>
<div class="cell" style="left:652px;top:475px">88,000</div>
<div class="ab" style="left:740px;top:235px;width:335px;height:19px;border:1px solid #000;border-bottom:none"></div>
<div class="ab" style="left:740px;top:253px;width:335px;height:1px;background:#000"></div>
<div class="ab" style="left:1072px;top:251px;width:5px;height:4px;background:#000"></div>
<div class="ab" style="left:1076px;top:236px;width:17px;height:17px;border:1px solid #9db2d3;border-radius:2px;background:linear-gradient(#f6f6f6,#dadada)"></div>
<div class="ab" style="left:1081px;top:243px;width:0;height:0;border-left:3.5px solid transparent;border-right:3.5px solid transparent;border-top:4px solid #2b3a80"></div>
<div class="ab" style="left:693px;top:254px;width:400px;height:122px;border:1px solid #000;background:#fff"></div>
<div class="ab" style="left:694px;top:255px;width:380px;height:15px;background:#3399ff"></div>
<div class="t" style="left:699px;top:257px;font-size:12px;line-height:15px;color:#fff">Wave S, RS, RSX, NEO, NEO FI,&nbsp; Wave 110RS</div>
<div class="t" style="left:699px;top:272px;font-size:12px;line-height:15px;color:#000">Wave 110S</div>
<div class="t" style="left:699px;top:287px;font-size:12px;line-height:15px;color:#000">Wave, Dream, Future, Alpha</div>
<div class="t" style="left:699px;top:302px;font-size:12px;line-height:15px;color:#000">Wave 110S</div>
<div class="t" style="left:699px;top:317px;font-size:12px;line-height:15px;color:#000">Dream</div>
<div class="t" style="left:699px;top:332px;font-size:12px;line-height:15px;color:#000">Wave alpha</div>
<div class="t" style="left:699px;top:347px;font-size:12px;line-height:15px;color:#000">Dream</div>
<div class="t" style="left:699px;top:362px;font-size:12px;line-height:15px;color:#000">Dream</div>
<div class="ab" style="left:1075px;top:255px;width:17px;height:120px;background:linear-gradient(90deg,#e6e6e6,#f0f0f0 20%,#f2f2f2)"></div>
<div class="ab" style="left:1075px;top:274px;width:16px;height:49px;border:1px solid #8c8c8c;border-radius:2px;background:linear-gradient(90deg,#f8f8f8,#ececec 45%,#d9d9d9 50%,#cfcfcf 85%,#bdbdbd)"></div>
<svg class="ab" style="left:1075px;top:255px" width="17" height="120"><path d="M5,10.8 L8.5,7 L12,10.8 Z" fill="#444"/><path d="M5,108.8 L12,108.8 L8.5,113 Z" fill="#444"/><path d="M4.5,39.5h6M4.5,42.5h6M4.5,45.5h6" stroke="#444" stroke-width="1"/></svg>
</body></html>
